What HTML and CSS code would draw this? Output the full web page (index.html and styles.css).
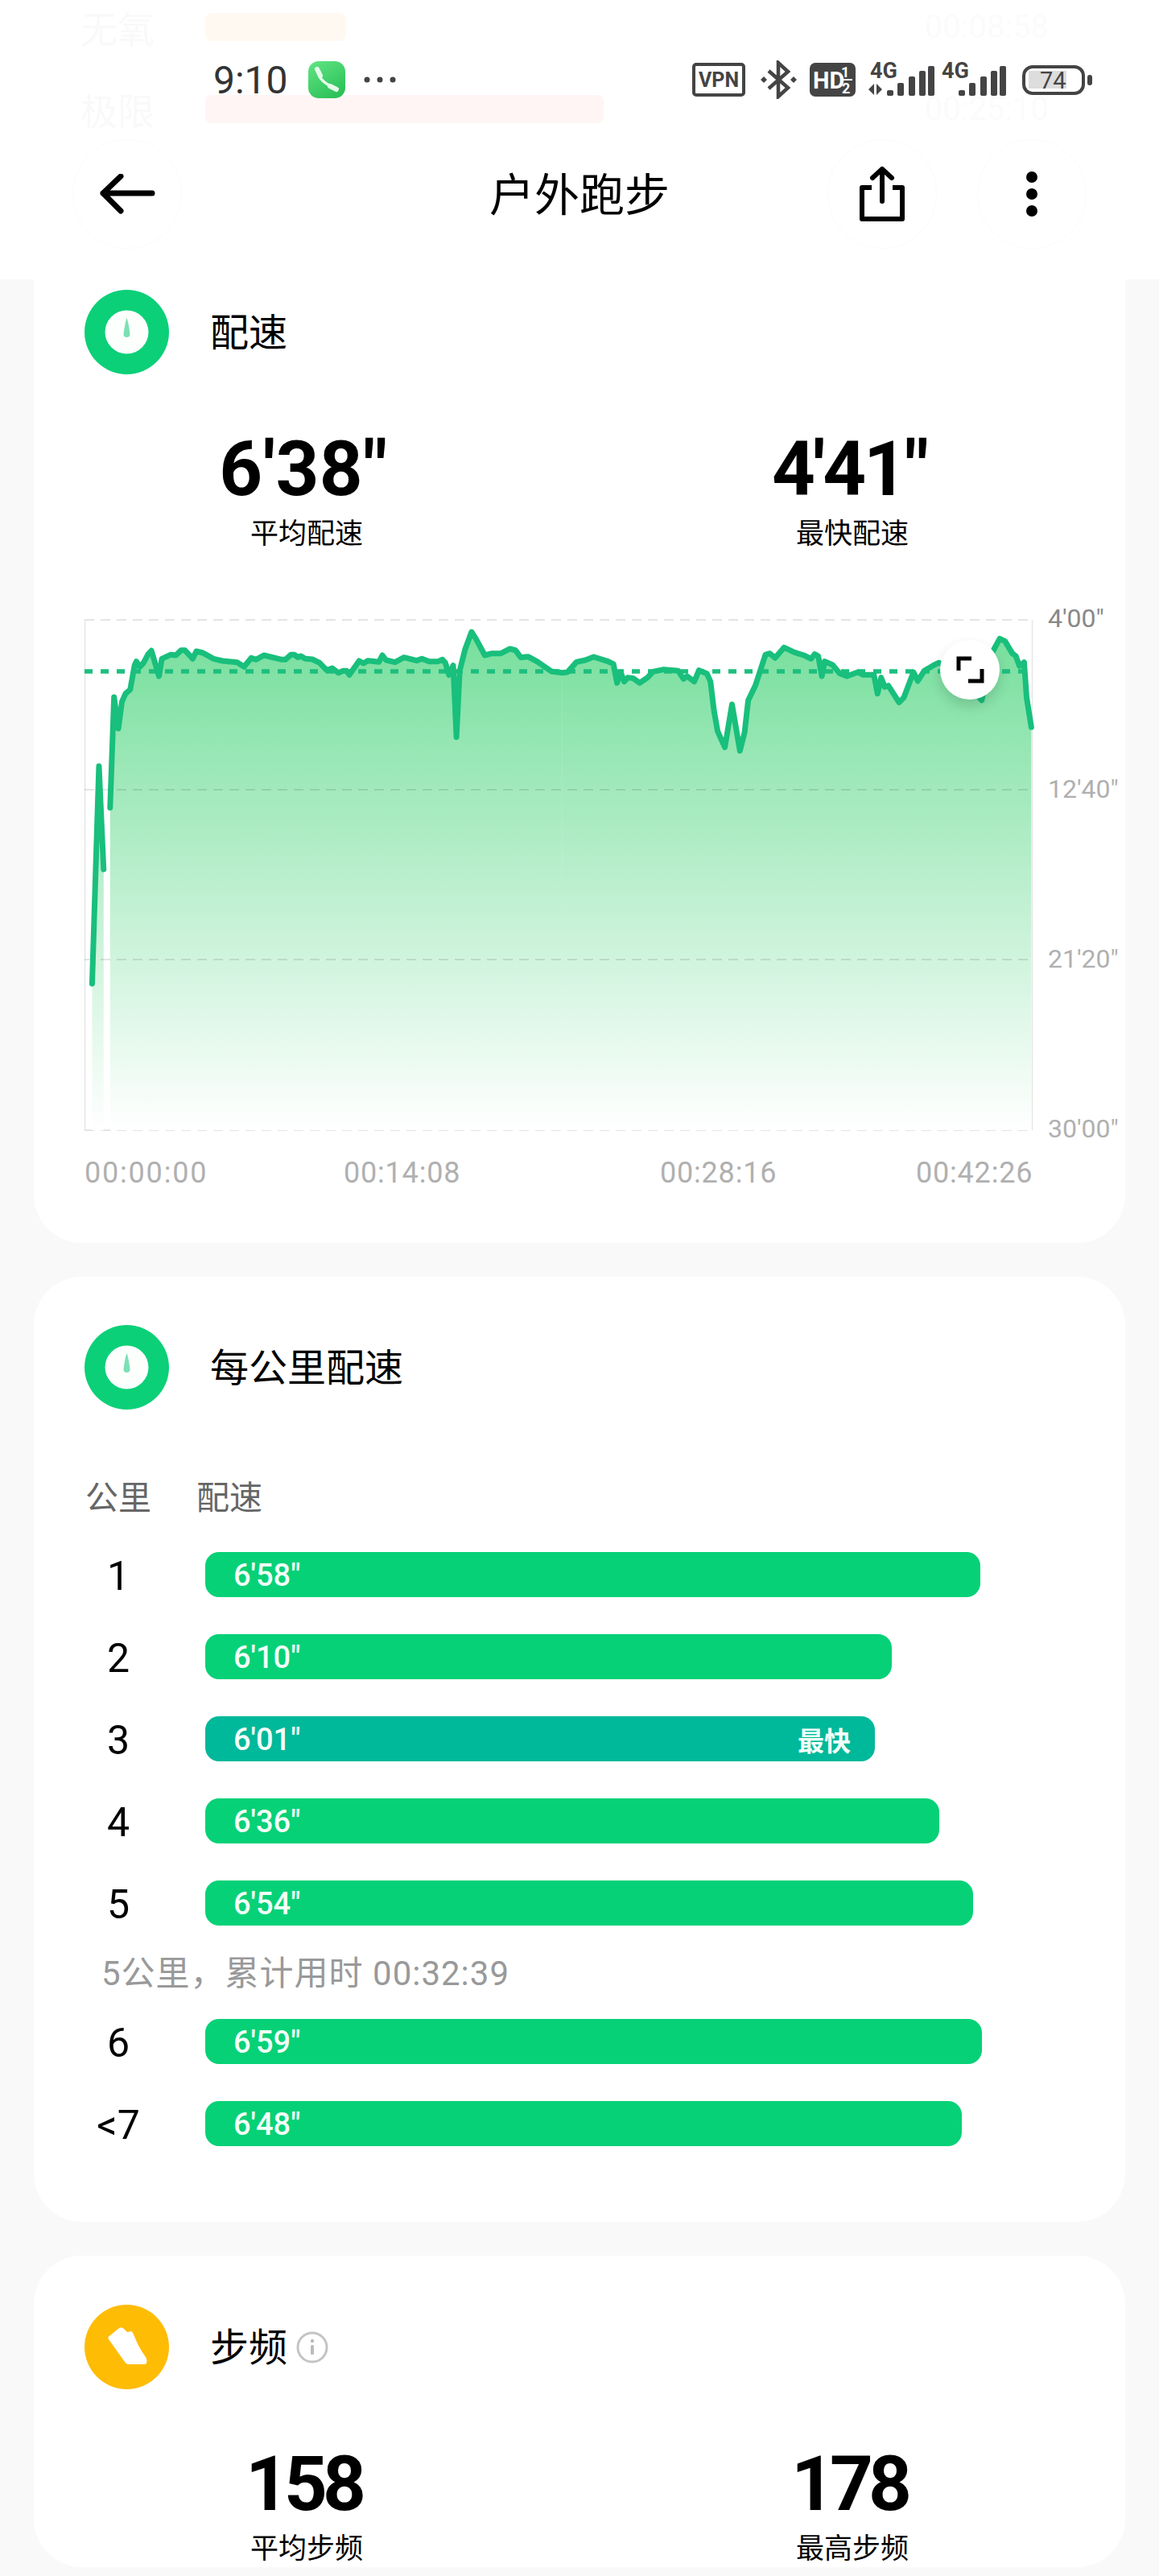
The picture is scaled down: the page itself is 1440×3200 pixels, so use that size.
FILE: index.html
```html
<!DOCTYPE html>
<html lang="zh-CN">
<head>
    <meta charset="UTF-8">
    <meta name="viewport" content="width=device-width, initial-scale=1.0">
    <title>户外跑步</title>
    <link rel="stylesheet" href="styles.css">
</head>
<body>
    <header class="top">
        <div class="status">
            <span class="clock">9:10</span>
            <svg class="phone" width="46" height="46" viewBox="0 0 46 46">
                <defs>
                    <linearGradient id="phoneBg" x1="0" y1="0" x2="0.6" y2="1">
                        <stop offset="0" stop-color="#62e585"/>
                        <stop offset="1" stop-color="#2dc259"/>
                    </linearGradient>
                </defs>
                <rect width="46" height="46" rx="13" fill="url(#phoneBg)"/>
                <path d="M12 13 Q14 26 33 33" fill="none" stroke="#e6fbe9" stroke-width="3.5"/>
                <path d="M11 10 L15 18 M27 31 L35 35" fill="none" stroke="#e6fbe9" stroke-width="6" stroke-linecap="round"/>
            </svg>
            <svg class="more-dots" width="40" height="8" viewBox="0 0 40 8">
                <circle cx="4" cy="4" r="3.5"/><circle cx="20" cy="4" r="3.5"/><circle cx="36" cy="4" r="3.5"/>
            </svg>
            <div class="status-icons">
                <svg width="66" height="42" viewBox="0 0 66 42">
                    <rect x="2" y="2" width="62" height="38" rx="3" fill="none" stroke="#444" stroke-width="4"/>
                    <text x="33" y="30" class="st-text" font-size="25" text-anchor="middle">VPN</text>
                </svg>
                <svg class="bt" width="45" height="48" viewBox="0 0 45 48">
                    <path d="M10 13 L34 34 L22 45 V3 L34 14 L10 35" fill="none" stroke="#444" stroke-width="4.5"/>
                    <path d="M0 24 L4 20 L8 24 L4 28Z M37 24 L41 20 L45 24 L41 28Z" fill="#444"/>
                </svg>
                <svg width="57" height="42" viewBox="0 0 57 42">
                    <rect width="57" height="42" rx="7" fill="#444"/>
                    <text x="4" y="32" class="st-text st-white" font-size="29">HD</text>
                    <text x="39" y="18" class="st-text st-white" font-size="18">1</text>
                    <rect x="38" y="20" width="15" height="2" fill="#fff"/>
                    <text x="40" y="38" class="st-text st-white" font-size="18">2</text>
                </svg>
                <svg class="sig" width="82" height="54" viewBox="0 -6 82 54">
                    <text x="2" y="19" class="st-text" font-size="27">4G</text>
                    <path d="M7 26 V40 L0 33 Z M10 40 V26 L17 33 Z" fill="#444"/>
                    <rect x="23" y="34" width="8" height="7" rx="2" fill="#444"/>
                    <rect x="36" y="25" width="8" height="16" rx="2" fill="#444"/>
                    <rect x="50" y="17" width="8" height="24" rx="2" fill="#444"/>
                    <rect x="63" y="10" width="8" height="31" rx="2" fill="#444"/>
                    <rect x="74" y="4" width="8" height="37" rx="2" fill="#444"/>
                </svg>
                <svg class="sig" width="80" height="54" viewBox="0 -6 80 54">
                    <text x="0" y="19" class="st-text" font-size="27">4G</text>
                    <rect x="21" y="34" width="8" height="7" rx="2" fill="#444"/>
                    <rect x="34" y="25" width="8" height="16" rx="2" fill="#444"/>
                    <rect x="48" y="17" width="8" height="24" rx="2" fill="#444"/>
                    <rect x="61" y="10" width="8" height="31" rx="2" fill="#444"/>
                    <rect x="72" y="4" width="8" height="37" rx="2" fill="#444"/>
                </svg>
                <svg class="batt" width="87" height="42" viewBox="0 0 87 42">
                    <rect x="2" y="5" width="74" height="33" rx="11" fill="none" stroke="#444" stroke-width="4"/>
                    <rect x="8" y="10" width="47" height="22" fill="#ddd"/>
                    <text x="22" y="32" class="st-num" font-size="29">74</text>
                    <rect x="81" y="15" width="6" height="13" rx="3" fill="#444"/>
                </svg>
            </div>
        </div>
        <nav class="nav">
            <div class="nav-left">
                <button class="nav-btn">
                    <svg width="70" height="50" viewBox="0 0 70 50">
                        <path d="M66 24 H5 M27 3 L5 24 L27 46" fill="none" stroke="#000" stroke-width="7" stroke-linecap="round" stroke-linejoin="round"/>
                    </svg>
                </button>
            </div>
            <h1>户外跑步</h1>
            <div class="nav-right">
                <button class="nav-btn">
                    <svg width="60" height="70" viewBox="0 0 60 70">
                        <path d="M17 27 H5 V66 H55 V27 H43" fill="none" stroke="#000" stroke-width="6" stroke-linejoin="round"/>
                        <path d="M30 44 V4 M18 15 L30 4 L42 15" fill="none" stroke="#000" stroke-width="6" stroke-linecap="round" stroke-linejoin="round"/>
                    </svg>
                </button>
                <button class="nav-btn">
                    <svg width="16" height="58" viewBox="0 0 16 58">
                        <circle cx="8" cy="8" r="7"/><circle cx="8" cy="29" r="7"/><circle cx="8" cy="50" r="7"/>
                    </svg>
                </button>
            </div>
        </nav>
    </header>

    <main class="page">
        <section class="card">
            <!-- the zones list scrolled under the header -->
            <div class="behind">
                <div class="zone">
                    <span class="zone-name">无氧</span>
                    <span class="zone-bar zone-orange"></span>
                    <span class="zone-time">00:08:58</span>
                </div>
                <div class="zone">
                    <span class="zone-name">极限</span>
                    <span class="zone-bar zone-red"></span>
                    <span class="zone-time">00:25:10</span>
                </div>
            </div>

            <div class="card-head">
                <svg class="card-icon" width="105" height="105" viewBox="0 0 105 105">
                    <circle cx="52.5" cy="52.5" r="52.5" fill="#0bd078"/>
                    <circle cx="52.5" cy="52.5" r="27" fill="#fdfffd"/>
                    <path d="M52.5 35 C51 38 49 50 48.5 55 a4 4 0 0 0 8 0 C56 50 54 38 52.5 35Z" fill="#7be0b4"/>
                </svg>
                <h2>配速</h2>
            </div>
            <div class="stats">
                <div class="stat">
                    <div class="stat-value stat-wide">6'38"</div>
                    <div class="stat-label">平均配速</div>
                </div>
                <div class="stat">
                    <div class="stat-value">4'41"</div>
                    <div class="stat-label">最快配速</div>
                </div>
            </div>

            <div class="chart">
                <svg width="1356" height="760" viewBox="42 750 1356 760">
                    <defs>
                        <linearGradient id="paceFill" gradientUnits="userSpaceOnUse" x1="0" y1="90" x2="0" y2="1992">
                            <stop offset="0" stop-color="#73de9a"/>
                            <stop offset="1" stop-color="#ffffff"/>
                        </linearGradient>
                    </defs>
                    <path d="M105.5 770 V1404 M1282.5 770 V1404" class="axis"/>
                    <path d="M105 770 H1283 M105 1404 H1283" class="grid-edge"/>
                    <g transform="translate(60 740) scale(0.4464 0.3333)">
                        <polygon fill="url(#paceFill)" points="122,1992 122,1446 141,635 154,1020 154,1992"/>
                        <polygon fill="url(#paceFill)" points="172,1992 172,790 183,378 195,495 205,395 215,365 228,350 240,260 245,245 255,265 265,250 278,218 287,205 308,300 316,235 340,220 355,222 370,203 380,203 402,235 412,207 430,213 460,235 485,243 525,248 545,265 565,232 578,238 600,222 650,238 660,238 675,220 685,220 695,230 703,225 715,235 735,237 755,250 775,278 790,270 808,288 820,280 830,280 838,295 865,243 877,252 890,242 920,247 930,222 940,240 965,248 990,230 1025,242 1040,235 1060,245 1085,245 1097,238 1105,250 1115,295 1127,260 1136,527 1145,280 1160,200 1178,135 1190,160 1215,222 1235,215 1260,215 1285,198 1300,203 1315,230 1335,227 1360,245 1400,282 1430,287 1445,285 1470,247 1495,240 1518,228 1558,245 1573,255 1583,325 1593,285 1603,320 1613,305 1628,308 1646,325 1668,305 1683,283 1713,275 1753,280 1768,310 1778,300 1798,320 1811,278 1833,290 1843,320 1853,430 1863,505 1883,565 1903,405 1925,578 1938,510 1948,390 1968,335 1996,220 2008,215 2023,232 2048,193 2078,212 2103,222 2123,235 2133,218 2143,225 2153,300 2161,245 2183,258 2203,290 2223,300 2253,285 2268,295 2298,295 2308,365 2318,305 2328,340 2338,335 2368,398 2381,380 2408,285 2420,318 2438,280 2463,260 2478,250 2518,270 2558,330 2598,390 2628,210 2648,160 2663,170 2683,215 2693,225 2703,262 2716,248 2723,380 2736,490 2736,1992"/>
                    </g>
                    <path d="M105 981 H1283 M105 1192 H1283" class="grid-mid"/>
                    <path d="M698 834 V1404" class="grid-faint"/>
                    <path d="M105 834 H1283" class="avg-line"/>
                    <g transform="translate(60 740) scale(0.4464 0.3333)">
                        <polyline class="pace-line" points="122,1446 141,635 154,1020"/>
                        <polyline class="pace-line" points="172,790 183,378 195,495 205,395 215,365 228,350 240,260 245,245 255,265 265,250 278,218 287,205 308,300 316,235 340,220 355,222 370,203 380,203 402,235 412,207 430,213 460,235 485,243 525,248 545,265 565,232 578,238 600,222 650,238 660,238 675,220 685,220 695,230 703,225 715,235 735,237 755,250 775,278 790,270 808,288 820,280 830,280 838,295 865,243 877,252 890,242 920,247 930,222 940,240 965,248 990,230 1025,242 1040,235 1060,245 1085,245 1097,238 1105,250 1115,295 1127,260 1136,527 1145,280 1160,200 1178,135 1190,160 1215,222 1235,215 1260,215 1285,198 1300,203 1315,230 1335,227 1360,245 1400,282 1430,287 1445,285 1470,247 1495,240 1518,228 1558,245 1573,255 1583,325 1593,285 1603,320 1613,305 1628,308 1646,325 1668,305 1683,283 1713,275 1753,280 1768,310 1778,300 1798,320 1811,278 1833,290 1843,320 1853,430 1863,505 1883,565 1903,405 1925,578 1938,510 1948,390 1968,335 1996,220 2008,215 2023,232 2048,193 2078,212 2103,222 2123,235 2133,218 2143,225 2153,300 2161,245 2183,258 2203,290 2223,300 2253,285 2268,295 2298,295 2308,365 2318,305 2328,340 2338,335 2368,398 2381,380 2408,285 2420,318 2438,280 2463,260 2478,250 2518,270 2558,330 2598,390 2628,210 2648,160 2663,170 2683,215 2693,225 2703,262 2716,248 2723,380 2736,490"/>
                    </g>
                    <text x="1302" y="779" class="y-label y-top">4'00"</text>
                    <text x="1302" y="991" class="y-label">12'40"</text>
                    <text x="1302" y="1202" class="y-label">21'20"</text>
                    <text x="1302" y="1413" class="y-label">30'00"</text>
                    <text x="105" y="1469" class="x-label x-zero">00:00:00</text>
                    <text x="427" y="1469" class="x-label">00:14:08</text>
                    <text x="820" y="1469" class="x-label">00:28:16</text>
                    <text x="1138" y="1469" class="x-label">00:42:26</text>
                </svg>
                <button class="expand">
                    <svg width="36" height="36" viewBox="0 0 36 36">
                        <path d="M4 19 V4 H20 M33 17 V32 H16" fill="none" stroke="#000" stroke-width="5"/>
                    </svg>
                </button>
            </div>
        </section>

        <section class="card card-km">
            <div class="card-head">
                <svg class="card-icon" width="105" height="105" viewBox="0 0 105 105">
                    <circle cx="52.5" cy="52.5" r="52.5" fill="#0bd078"/>
                    <circle cx="52.5" cy="52.5" r="27" fill="#fdfffd"/>
                    <path d="M52.5 35 C51 38 49 50 48.5 55 a4 4 0 0 0 8 0 C56 50 54 38 52.5 35Z" fill="#7be0b4"/>
                </svg>
                <h2>每公里配速</h2>
            </div>
            <div class="km-head">
                <span>公里</span>
                <span>配速</span>
            </div>
            <div class="km-list">
                <div class="km-row">
                    <span class="km-num">1</span>
                    <div class="km-bar" style="width: 963px">6'58"</div>
                </div>
                <div class="km-row">
                    <span class="km-num">2</span>
                    <div class="km-bar" style="width: 853px">6'10"</div>
                </div>
                <div class="km-row">
                    <span class="km-num">3</span>
                    <div class="km-bar km-best" style="width: 832px">6'01"<span class="best-tag">最快</span></div>
                </div>
                <div class="km-row">
                    <span class="km-num">4</span>
                    <div class="km-bar" style="width: 912px">6'36"</div>
                </div>
                <div class="km-row">
                    <span class="km-num">5</span>
                    <div class="km-bar" style="width: 954px">6'54"</div>
                </div>
                <div class="km-sum">5公里，累计用时 00:32:39</div>
                <div class="km-row">
                    <span class="km-num">6</span>
                    <div class="km-bar" style="width: 965px">6'59"</div>
                </div>
                <div class="km-row">
                    <span class="km-num">&lt;7</span>
                    <div class="km-bar" style="width: 940px">6'48"</div>
                </div>
            </div>
        </section>

        <section class="card card-step">
            <div class="card-head">
                <svg class="card-icon" width="105" height="105" viewBox="0 0 105 105">
                    <circle cx="52.5" cy="52.5" r="52.5" fill="#ffbc05"/>
                    <path d="M30 43 Q28 40 32 38 L43 29 Q46 27 49 30 L53 34 L58 33 Q60 34 61 37 L64 44 Q68 54 76 65 Q79 70 76 74 L54 74 Q52 74 50 71 Z" fill="#fff"/>
                </svg>
                <h2>步频</h2>
                <svg class="info" width="40" height="40" viewBox="0 0 40 40">
                    <circle cx="20" cy="20" r="18" fill="none" stroke="#c4c4c4" stroke-width="3"/>
                    <circle cx="20" cy="12" r="2.2" fill="#bbb"/>
                    <rect x="18" y="17" width="4" height="12" rx="1.5" fill="#bbb"/>
                </svg>
            </div>
            <div class="stats">
                <div class="stat">
                    <div class="stat-value stat-tight">158</div>
                    <div class="stat-label">平均步频</div>
                </div>
                <div class="stat">
                    <div class="stat-value stat-tight">178</div>
                    <div class="stat-label">最高步频</div>
                </div>
            </div>
        </section>
    </main>
</body>
</html>
```

FILE: styles.css
```css
html, body {
    margin: 0;
    height: 3200px;
    overflow: hidden;
}
body {
    position: relative;
    background-color: #f9f9f9;
    font-family: Roboto, "Noto Sans CJK SC", sans-serif;
    color: #000;
}
h1, h2 {
    margin: 0;
    font-weight: 400;
}
button {
    padding: 0;
    border: none;
    background: none;
}

/* fixed header, slightly see-through */
.top {
    position: absolute;
    top: 0;
    left: 0;
    z-index: 2;
    width: 1440px;
    height: 347px;
    padding-top: 75px;
    box-sizing: border-box;
    background-color: rgba(255, 255, 255, 0.95);
}
.status {
    display: flex;
    align-items: center;
    height: 48px;
    padding: 0 83px 0 265px;
}
.clock {
    font-size: 48px;
    color: #333;
}
.phone {
    margin-left: 25px;
}
.more-dots {
    margin-left: 23px;
    fill: #444;
}
.status-icons {
    display: flex;
    align-items: center;
    gap: 16px;
    margin-left: auto;
}
.bt {
    margin-left: 3px;
}
.sig + .sig {
    margin-left: -7px;
}
.batt {
    margin-left: 4px;
}
.st-text {
    font-family: Roboto, sans-serif;
    font-weight: 700;
    fill: #444;
}
.st-white {
    fill: #fff;
}
.st-num {
    font-family: Roboto, sans-serif;
    fill: #444;
}

.nav {
    display: grid;
    grid-template-columns: 1fr auto 1fr;
    align-items: center;
    margin-top: 50px;
    padding: 0 90px;
}
.nav h1 {
    padding-top: 3px;
    font-size: 56px;
    line-height: 70px;
}
.nav-left {
    display: flex;
}
.nav-right {
    display: flex;
    justify-content: flex-end;
    gap: 50px;
}
.nav-btn {
    display: flex;
    align-items: center;
    justify-content: center;
    width: 136px;
    height: 136px;
    border: 1px solid #fbfbfb;
    border-radius: 50%;
    box-sizing: border-box;
}

.page {
    display: flex;
    flex-direction: column;
    gap: 42px;
    padding: 0 42px;
}
.card {
    background-color: #fff;
    border-radius: 60px;
}
.card-km {
    padding: 60px 0 94px;
}
.card-step {
    padding-top: 61px;
}

.behind {
    display: flex;
    flex-direction: column;
    gap: 46px;
    height: 360px;
    padding: 5px 95px 0 58px;
    box-sizing: border-box;
}
.zone {
    display: flex;
    align-items: center;
    height: 56px;
}
.zone-name {
    width: 155px;
    font-size: 46px;
    color: #878787;
}
.zone-bar {
    height: 35px;
    border-radius: 8px;
}
.zone-orange {
    width: 175px;
    background-color: #ff870f;
}
.zone-red {
    width: 495px;
    background-color: #ff3737;
}
.zone-time {
    margin-left: auto;
    font-size: 40px;
    color: #afafaf;
}

.card-head {
    display: flex;
    align-items: center;
    padding-left: 63px;
}
.card-head h2 {
    margin-left: 51px;
    padding-bottom: 8px;
    font-size: 48px;
}
.info {
    margin-left: 11px;
}

.stats {
    display: grid;
    grid-template-columns: 1fr 1fr;
    margin-top: 72px;
}
.stat {
    text-align: center;
}
.stat-value {
    padding-right: 8px;
    font-size: 94px;
    line-height: 92px;
    font-weight: 700;
    letter-spacing: -3px;
}
.stat-wide {
    letter-spacing: 0.5px;
}
.stat-tight {
    letter-spacing: -6px;
}
.stat-label {
    margin-top: 13px;
    font-size: 35px;
    line-height: 44px;
}

.chart {
    position: relative;
    margin-top: 64px;
    padding-bottom: 34px;
}
.chart svg {
    display: block;
}
.axis {
    stroke: #e6e6e6;
    stroke-width: 1.5;
    fill: none;
}
.grid-edge {
    stroke: #e4e4e4;
    stroke-width: 2;
    stroke-dasharray: 12 8;
    fill: none;
}
.grid-mid {
    stroke: rgba(0, 0, 0, 0.1);
    stroke-width: 2;
    stroke-dasharray: 12 8;
    fill: none;
}
.grid-faint {
    stroke: rgba(255, 255, 255, 0.08);
    stroke-width: 1.5;
    fill: none;
}
.avg-line {
    stroke: #1dbf7e;
    stroke-width: 5.5;
    stroke-dasharray: 10 10;
    fill: none;
}
.pace-line {
    fill: none;
    stroke: #19bf7c;
    stroke-width: 7;
    stroke-linejoin: round;
    stroke-linecap: round;
    vector-effect: non-scaling-stroke;
}
.y-label {
    font-size: 32px;
    fill: #b0b0b0;
}
.y-top {
    fill: #888;
}
.x-label {
    font-size: 36px;
    letter-spacing: 0.8px;
    fill: #b0b0b0;
}
.x-zero {
    letter-spacing: 1.8px;
}
.expand {
    position: absolute;
    top: 45px;
    left: 1126px;
    display: flex;
    align-items: center;
    justify-content: center;
    width: 74px;
    height: 74px;
    border-radius: 50%;
    background-color: #fff;
    box-shadow: 0 8px 16px rgba(0, 0, 0, 0.14);
}

.km-head {
    display: flex;
    gap: 56px;
    margin-top: 82px;
    padding-left: 64px;
    font-size: 41px;
    line-height: 56px;
    color: #666;
}
.km-list {
    display: flex;
    flex-direction: column;
    gap: 46px;
    margin-top: 39px;
    padding-left: 63px;
}
.km-row {
    display: flex;
    align-items: center;
    height: 56px;
}
.km-num {
    width: 84px;
    margin-right: 66px;
    padding-top: 3px;
    font-size: 50px;
    text-align: center;
}
.km-bar {
    display: flex;
    align-items: center;
    justify-content: space-between;
    height: 56px;
    padding: 2px 30px 0 35px;
    box-sizing: border-box;
    border-radius: 17px;
    background-color: #06d177;
    font-size: 38px;
    font-weight: 500;
    color: #f2fff8;
}
.km-best {
    background-color: #00b89a;
}
.best-tag {
    font-size: 33px;
    font-weight: 700;
}
.km-sum {
    height: 24px;
    padding-left: 21px;
    font-size: 42px;
    line-height: 28px;
    letter-spacing: 1px;
    color: #999;
}
```
